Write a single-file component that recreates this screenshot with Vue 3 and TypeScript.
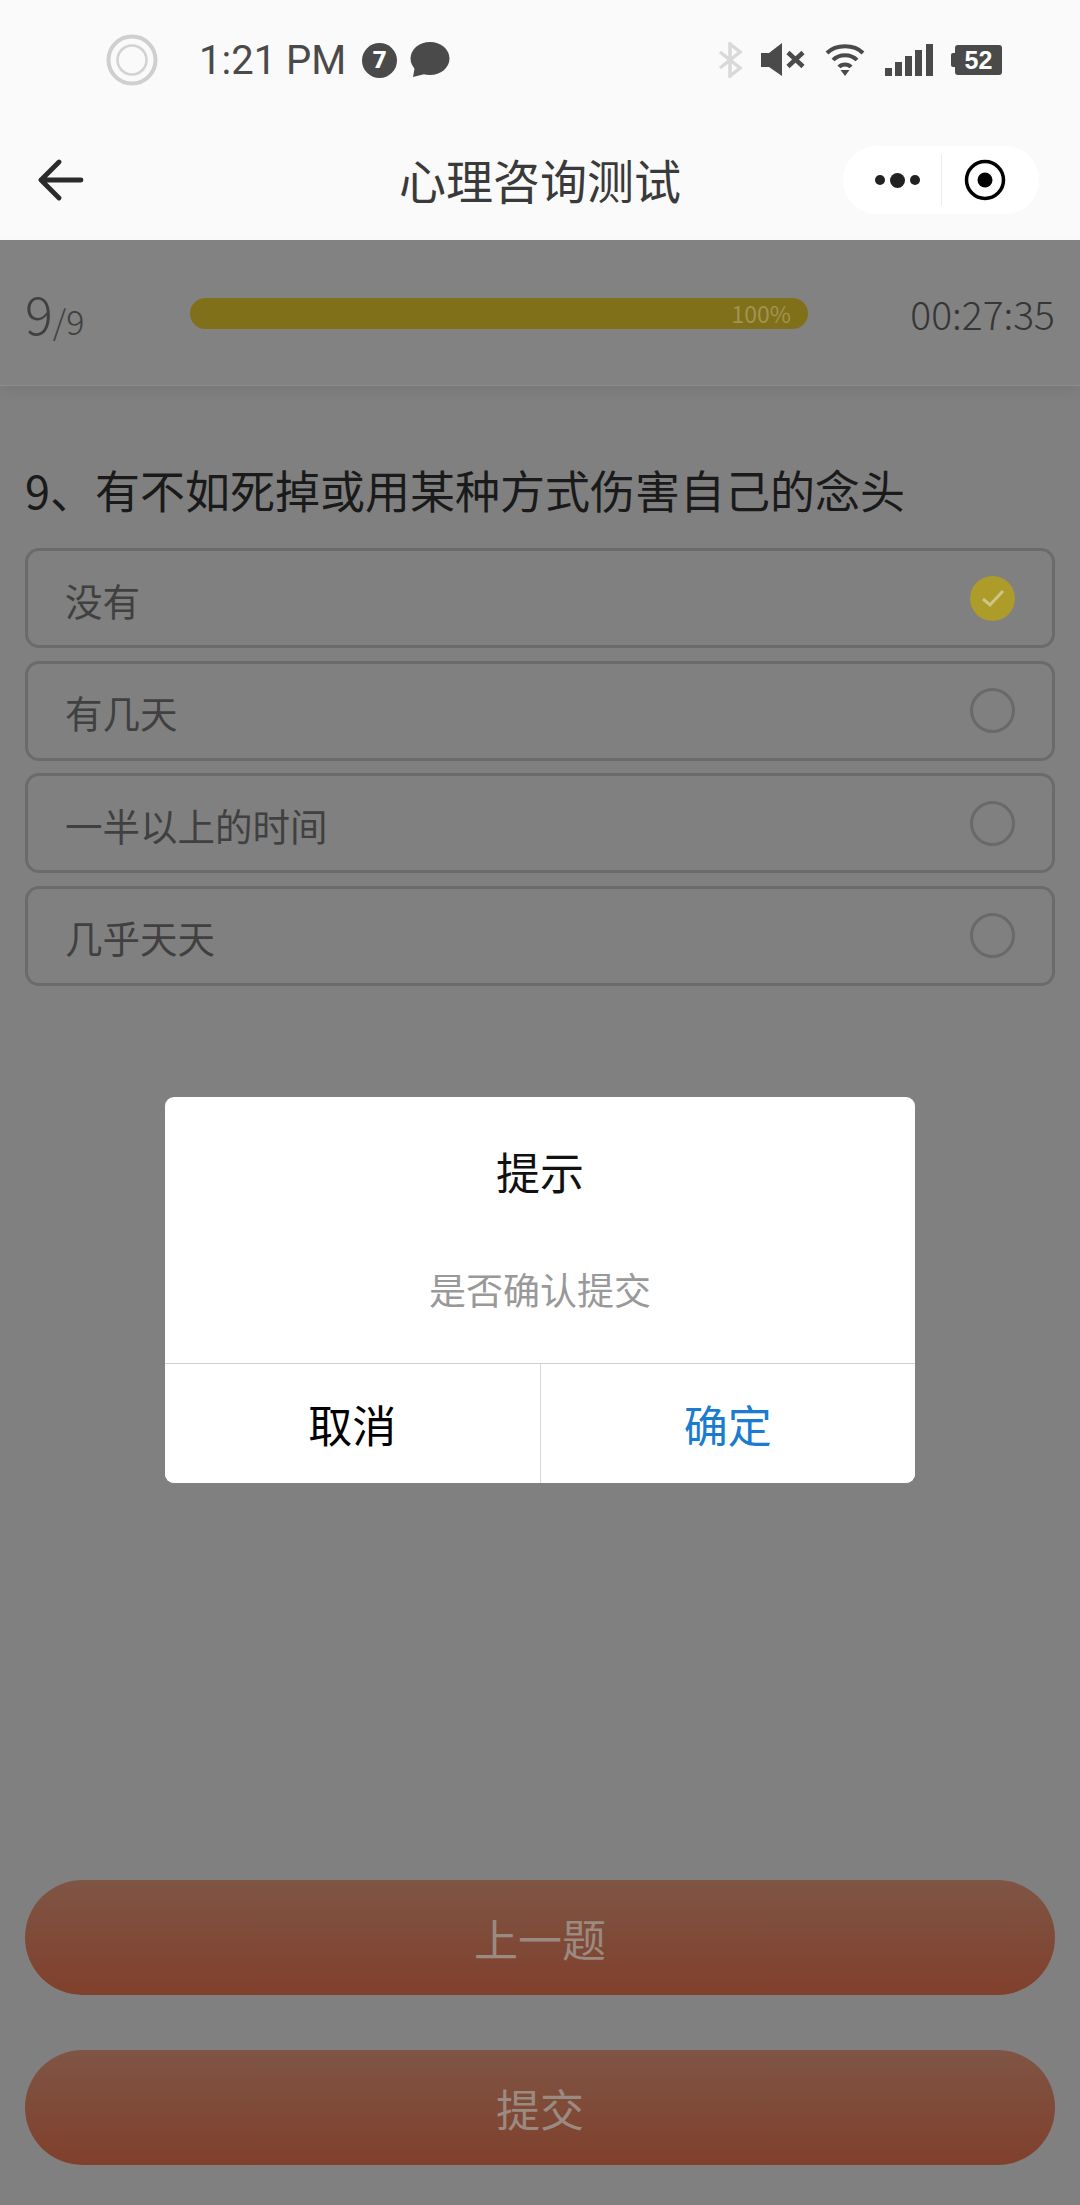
<script setup lang="ts">
interface Option {
  label: string;
  checked: boolean;
}

const options: Option[] = [
  { label: '没有', checked: true },
  { label: '有几天', checked: false },
  { label: '一半以上的时间', checked: false },
  { label: '几乎天天', checked: false },
];

const signalBars = [
  { x: 0, h: 8 },
  { x: 10, h: 14 },
  { x: 20, h: 20 },
  { x: 30, h: 26 },
  { x: 41, h: 32 },
];
</script>

<template>
  <div class="page">
    <div class="status-bar">
      <div class="status-left">
        <svg class="ring" width="52" height="52" viewBox="0 0 52 52">
          <circle cx="26" cy="26" r="23.5" fill="none" stroke="#cfcfcf" stroke-width="4" />
          <circle cx="26" cy="26" r="14.5" fill="none" stroke="#d2d2d2" stroke-width="2.5" />
        </svg>
        <span class="time">1:21 PM</span>
        <span class="badge">7</span>
        <svg class="bubble" width="40" height="36" viewBox="0 0 40 36">
          <ellipse cx="20" cy="16.5" rx="19.5" ry="16.5" fill="#4a4a4a" />
          <path d="M5 24 L3 35 L15 32 Z" fill="#4a4a4a" />
        </svg>
      </div>
      <div class="status-right">
        <svg width="26" height="36" viewBox="0 0 26 36">
          <path d="M2 10 L22 26 L12 34 L12 2 L22 10 L2 26" fill="none" stroke="#d9d9d9" stroke-width="3.5" />
        </svg>
        <svg class="gap-speaker" width="44" height="34" viewBox="0 0 44 34">
          <path d="M0 10 H8 L21 0 V33 L8 24 H0 Z" fill="#4a4a4a" />
          <path d="M27 9.500 L42 23.500 M42 9.500 L27 23.500" stroke="#4a4a4a" stroke-width="4.500" />
        </svg>
        <svg class="gap-wifi" width="40" height="34" viewBox="0 0 40 34">
          <path d="M2 10 C11 1 29 1 38 10" fill="none" stroke="#4a4a4a" stroke-width="4" />
          <path d="M8 17 C14 10.500 26 10.500 32 17" fill="none" stroke="#4a4a4a" stroke-width="4" />
          <path d="M14 24 C17 20.500 23 20.500 26 24" fill="none" stroke="#4a4a4a" stroke-width="4" />
          <path d="M15.500 27 H24.500 L20 33 Z" fill="#4a4a4a" />
        </svg>
        <svg class="gap-signal" width="49" height="32" viewBox="0 0 49 32">
          <rect v-for="bar in signalBars" :key="bar.x" :x="bar.x" :y="32 - bar.h" width="7" :height="bar.h" fill="#4a4a4a" />
        </svg>
        <div class="battery">
          <span class="battery-cap"></span>
          <span class="battery-body">52</span>
        </div>
      </div>
    </div>

    <div class="nav-bar">
      <svg class="back" width="46" height="42" viewBox="0 0 46 42">
        <path d="M43 21 H3 M21 3 L3 21 L21 39" fill="none" stroke="#2b2b2b" stroke-width="4.800" stroke-linecap="round" stroke-linejoin="round" />
      </svg>
      <h1 class="nav-title">心理咨询测试</h1>
      <div class="capsule">
        <div class="capsule-more">
          <i class="dot"></i><i class="dot dot-big"></i><i class="dot"></i>
        </div>
        <div class="capsule-target">
          <svg width="42" height="42" viewBox="0 0 42 42">
            <circle cx="21" cy="21" r="18.500" fill="none" stroke="#000" stroke-width="3.500" />
            <circle cx="21" cy="21" r="7.500" fill="#000" />
          </svg>
        </div>
      </div>
    </div>

    <main class="content">
      <div class="progress-bar">
        <div class="count"><span class="count-now">9</span><span class="count-total">/9</span></div>
        <div class="track"><span class="track-label">100%</span></div>
        <div class="timer">00:27:35</div>
      </div>

      <h2 class="question">9、有不如死掉或用某种方式伤害自己的念头</h2>

      <div class="options">
        <div v-for="option in options" :key="option.label" class="option">
          <span class="option-label">{{ option.label }}</span>
          <span class="radio" :class="{ 'radio-checked': option.checked }">
            <svg v-if="option.checked" width="26" height="22" viewBox="0 0 26 22">
              <path d="M3 12 L10 18 L23 4" fill="none" stroke="#cfc584" stroke-width="3" />
            </svg>
          </span>
        </div>
      </div>

      <div class="actions">
        <button type="button" class="action-btn">上一题</button>
        <button type="button" class="action-btn">提交</button>
      </div>

      <div class="dialog">
        <div class="dialog-title">提示</div>
        <div class="dialog-message">是否确认提交</div>
        <div class="dialog-footer">
          <button type="button" class="dialog-btn">取消</button>
          <button type="button" class="dialog-btn dialog-btn-primary">确定</button>
        </div>
      </div>
    </main>
  </div>
</template>

<style>
html,
body {
  margin: 0;
  background: #808080;
}
</style>

<style scoped>
.page {
  width: 1080px;
  height: 2205px;
  display: flex;
  flex-direction: column;
  overflow: hidden;
  font-family: "Noto Sans CJK SC", "Noto Sans", sans-serif;
  background: #fafafa;
}

.status-bar {
  height: 120px;
  flex: none;
  display: flex;
  align-items: center;
  justify-content: space-between;
  padding: 0 78px 0 106px;
  box-sizing: border-box;
}

.status-left,
.status-right {
  display: flex;
  align-items: center;
}

.time {
  margin-left: 41px;
  font-family: Roboto, sans-serif;
  font-size: 40px;
  color: #4a4a4a;
}

.badge {
  width: 35px;
  height: 35px;
  margin-left: 16px;
  border-radius: 50%;
  background: #4a4a4a;
  color: #fff;
  font-family: Roboto, sans-serif;
  font-size: 24px;
  font-weight: 900;
  line-height: 35px;
  text-align: center;
}

.bubble {
  margin-left: 13px;
}

.gap-speaker {
  margin-left: 17px;
}

.gap-wifi {
  margin-left: 20px;
}

.gap-signal {
  margin-left: 20px;
}

.battery {
  display: flex;
  align-items: center;
  margin-left: 17px;
}

.battery-cap {
  width: 4px;
  height: 14px;
  background: #4a4a4a;
  border-radius: 2px 0 0 2px;
}

.battery-body {
  width: 47px;
  height: 30px;
  border-radius: 3px;
  background: #4a4a4a;
  color: #fff;
  font-family: "Liberation Sans", sans-serif;
  font-size: 25px;
  font-weight: 700;
  line-height: 30px;
  text-align: center;
}

.nav-bar {
  height: 120px;
  flex: none;
  display: flex;
  align-items: center;
  padding: 0 41px 4px 38px;
  box-sizing: border-box;
  position: relative;
}

.back {
  margin-top: 4px;
}

.nav-title {
  position: absolute;
  left: 0;
  right: 0;
  top: 24px;
  margin: 0;
  font-size: 47px;
  font-weight: 400;
  line-height: 70px;
  text-align: center;
  color: #3a3a3a;
}

.capsule {
  margin-left: auto;
  width: 196px;
  height: 68px;
  margin-top: 4px;
  display: flex;
  align-items: center;
  background: #fff;
  border-radius: 34px;
}

.capsule-more {
  width: 99px;
  height: 52px;
  display: flex;
  align-items: center;
  justify-content: center;
  gap: 5px;
  padding-left: 11px;
  box-sizing: border-box;
  border-right: 1px solid #ececec;
}

.dot {
  width: 10px;
  height: 10px;
  border-radius: 50%;
  background: #222;
}

.dot-big {
  width: 15px;
  height: 15px;
}

.capsule-target {
  flex: 1;
  display: flex;
  align-items: center;
  justify-content: center;
  padding-right: 12px;
}

.content {
  position: relative;
  flex: 1;
  display: flex;
  flex-direction: column;
  background: #808080;
}

.progress-bar {
  height: 146px;
  flex: none;
  display: flex;
  align-items: center;
  padding: 0 25px;
  box-sizing: border-box;
  background: #828282;
  border-bottom: 1px solid #8c8c8c;
  box-shadow: 0 6px 12px rgba(0, 0, 0, 0.06);
}

.count {
  width: 165px;
  color: #404040;
  margin-top: 0;
  line-height: 1;
}

.count-now {
  font-size: 52px;
  font-weight: 300;
}

.count-total {
  font-size: 34px;
  font-weight: 300;
}

.track {
  width: 618px;
  height: 31px;
  margin-top: 2px;
  border-radius: 16px;
  background: #80701a;
  display: flex;
  align-items: center;
  justify-content: flex-end;
  padding-right: 17px;
  box-sizing: border-box;
}

.track-label {
  font-size: 23px;
  line-height: 31px;
  color: #a09450;
}

.timer {
  margin-left: auto;
  font-size: 39px;
  font-weight: 300;
  color: #363636;
}

.question {
  margin: 72px 25px 0;
  font-size: 45px;
  font-weight: 400;
  line-height: 64px;
  color: #1a1a1a;
}

.options {
  display: flex;
  flex-direction: column;
  gap: 12.500px;
  margin: 26px 25px 0;
}

.option {
  height: 100px;
  display: flex;
  align-items: center;
  justify-content: space-between;
  padding: 0 37px 0 37px;
  box-sizing: border-box;
  border: 3px solid #6b6b6b;
  border-radius: 14px;
}

.option-label {
  font-size: 37.500px;
  line-height: 50px;
  margin-top: 3px;
  color: #404040;
}

.radio {
  width: 45px;
  height: 45px;
  display: flex;
  align-items: center;
  justify-content: center;
  box-sizing: border-box;
  border: 3px solid #696969;
  border-radius: 50%;
}

.radio-checked {
  border: none;
  background: #ae9c2a;
}

.actions {
  margin-top: auto;
  display: flex;
  flex-direction: column;
  gap: 55px;
  padding: 0 25px 40px;
}

.action-btn {
  height: 115px;
  padding: 0;
  border: none;
  border-radius: 58px;
  background: linear-gradient(180deg, #7f5545, #80402c);
  color: #9a8a80;
  font-family: inherit;
  font-size: 44px;
}

.dialog {
  position: absolute;
  left: 165px;
  top: 857px;
  width: 750px;
  height: 386px;
  display: flex;
  flex-direction: column;
  background: #fff;
  border-radius: 9px;
  overflow: hidden;
}

.dialog-title {
  margin-top: 41px;
  font-size: 44px;
  line-height: 66px;
  text-align: center;
  color: #111;
}

.dialog-message {
  margin-top: 57px;
  font-size: 37px;
  line-height: 56px;
  text-align: center;
  color: #999;
}

.dialog-footer {
  margin-top: auto;
  height: 119px;
  display: flex;
  border-top: 1px solid #d0d0d0;
}

.dialog-btn {
  flex: 1;
  padding: 0;
  border: none;
  background: #fff;
  font-family: inherit;
  font-size: 44px;
  color: #000;
}

.dialog-btn-primary {
  border-left: 1px solid #d8d8d8;
  color: #1a7ccf;
}
</style>
